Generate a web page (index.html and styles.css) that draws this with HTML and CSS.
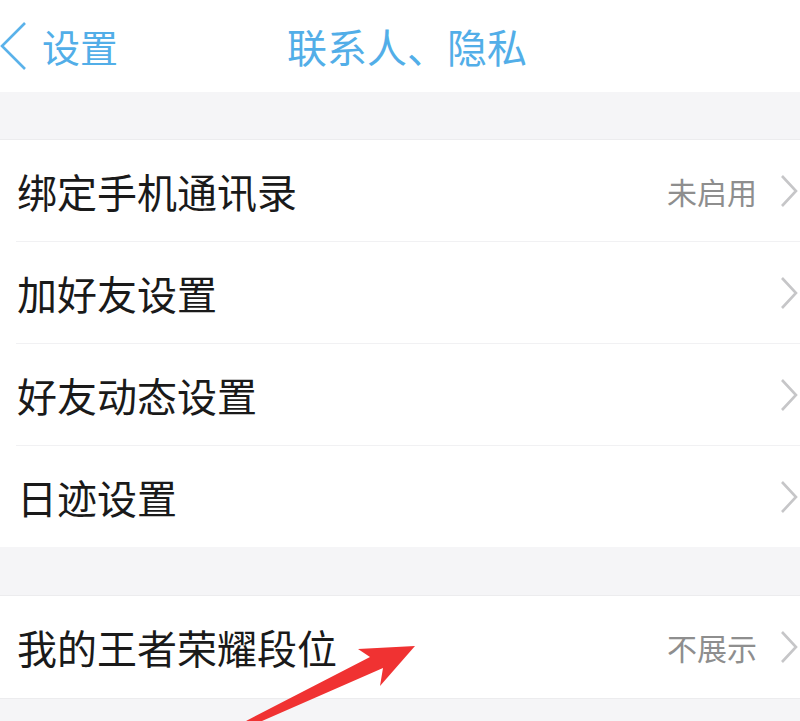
FILE: index.html
```html
<!DOCTYPE html>
<html lang="zh">
<head>
<meta charset="utf-8">
<link rel="stylesheet" href="styles.css">
</head>
<body>
<div class="page">
  <header class="nav">
    <div class="back">
      <svg class="back-icon" width="28" height="50" viewBox="0 0 28 50"><polyline points="25,2 2,25 25,48" fill="none" stroke="#5ab2ea" stroke-width="2.6"/></svg>
      <span class="back-text">设置</span>
    </div>
    <div class="title">联系人、隐私</div>
    <div></div>
  </header>
  <div class="gap first"></div>
  <section class="group">
    <div class="row"><span class="label">绑定手机通讯录</span><span class="right"><span class="value">未启用</span><svg class="chev" width="20" height="34" viewBox="0 0 20 34"><polyline points="3,2 17,17 3,32" fill="none" stroke="#c6c6c8" stroke-width="2.6"/></svg></span></div>
    <div class="row"><span class="label">加好友设置</span><span class="right"><svg class="chev" width="20" height="34" viewBox="0 0 20 34"><polyline points="3,2 17,17 3,32" fill="none" stroke="#c6c6c8" stroke-width="2.6"/></svg></span></div>
    <div class="row"><span class="label">好友动态设置</span><span class="right"><svg class="chev" width="20" height="34" viewBox="0 0 20 34"><polyline points="3,2 17,17 3,32" fill="none" stroke="#c6c6c8" stroke-width="2.6"/></svg></span></div>
    <div class="row"><span class="label">日迹设置</span><span class="right"><svg class="chev" width="20" height="34" viewBox="0 0 20 34"><polyline points="3,2 17,17 3,32" fill="none" stroke="#c6c6c8" stroke-width="2.6"/></svg></span></div>
  </section>
  <div class="gap"></div>
  <section class="group last">
    <div class="row"><span class="label">我的王者荣耀段位</span><span class="right"><span class="value">不展示</span><svg class="chev" width="20" height="34" viewBox="0 0 20 34"><polyline points="3,2 17,17 3,32" fill="none" stroke="#c6c6c8" stroke-width="2.6"/></svg></span></div>
  </section>
  <div class="gap tail"></div>
  <svg class="arrow" width="800" height="721" viewBox="0 0 800 721"><polygon points="415,646 380,686 383,668 262,721 246,721 370,657 358,649" fill="#f03232"/></svg>
</div>
</body>
</html>
```
FILE: styles.css
```css
html, body {
  margin: 0;
  padding: 0;
  background: #ffffff;
}
.page {
  position: relative;
  width: 800px;
  height: 721px;
  overflow: hidden;
  font-family: "Noto Sans CJK SC", "Noto Sans", sans-serif;
  background: #f5f5f7;
}
.nav {
  height: 92px;
  background: #ffffff;
  display: grid;
  grid-template-columns: 1fr auto 1fr;
  align-items: center;
}
.back {
  display: flex;
  align-items: center;
  gap: 14px;
}
.back-icon {
  display: block;
}
.back-text {
  font-size: 38px;
  color: #52aee8;
  line-height: 1;
}
.title {
  font-size: 40px;
  color: #52aee8;
  line-height: 1;
  padding-left: 14px;
}
.gap {
  height: 48px;
  background: #f5f5f7;
  border-bottom: 1px solid #ececee;
}
.gap.first {
  height: 47px;
}
.gap.tail {
  height: 30px;
  border-top: 1px solid #ececee;
  border-bottom: none;
}
.group {
  background: #ffffff;
  padding-left: 16px;
}
.row {
  height: 101px;
  display: flex;
  align-items: center;
  justify-content: space-between;
  border-bottom: 1px solid #f1f1f3;
}
.group .row:last-child {
  border-bottom: none;
}
.group.last .row {
  height: 102px;
}
.label {
  font-size: 40px;
  color: #1a1a1a;
  line-height: 1;
  padding-left: 1px;
}
.right {
  display: flex;
  align-items: center;
  gap: 22px;
}
.value {
  font-size: 30px;
  color: #8e8e8e;
  line-height: 1;
}
.chev {
  display: block;
  margin-right: 1px;
}
.arrow {
  position: absolute;
  left: 0;
  top: 0;
  pointer-events: none;
}
```
